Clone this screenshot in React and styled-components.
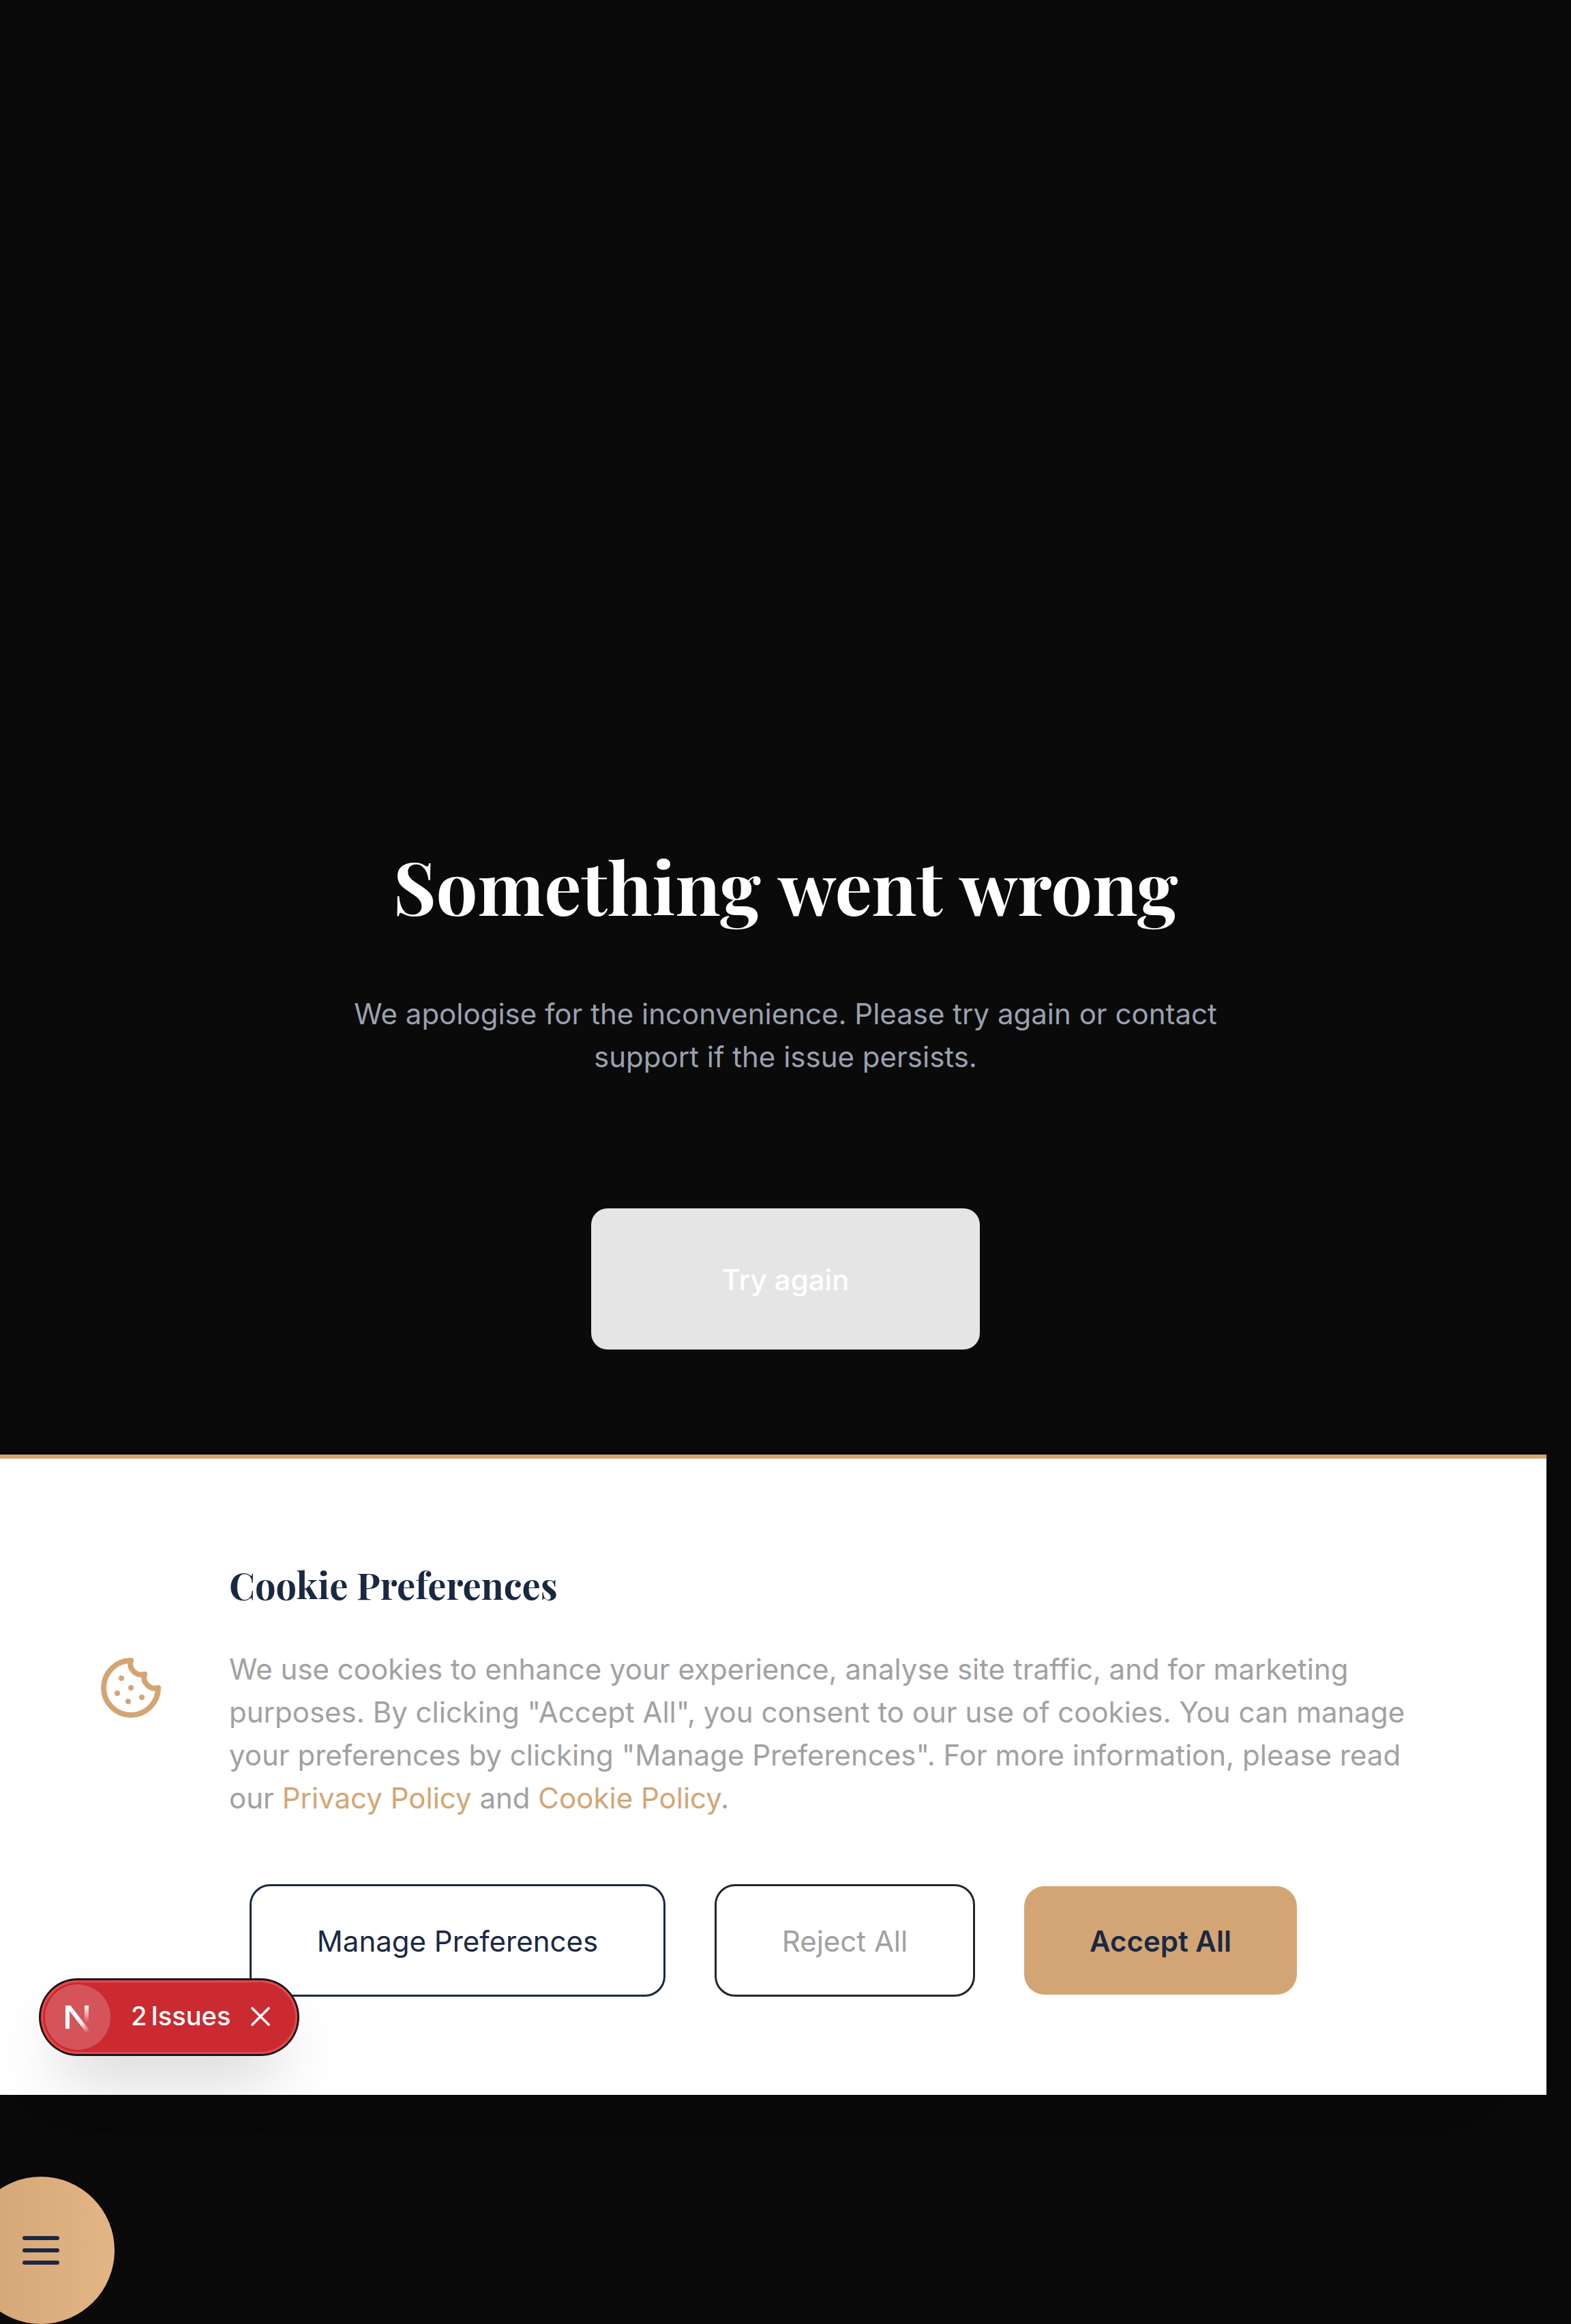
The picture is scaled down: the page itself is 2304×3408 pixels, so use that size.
import React from "react";
import styled, { createGlobalStyle } from "styled-components";
import { Cookie } from "lucide-react";

const navy = "#1a2942";
const tan = "#d4a574";
const serif = `"Playfair Display", "Liberation Serif", serif`;
const sans = `Inter, "Liberation Sans", sans-serif`;

const GlobalStyle = createGlobalStyle`
  *, *::before, *::after { box-sizing: border-box; }
  html, body { margin: 0; background: #0a0a0a; }
  h1, h2, p { margin: 0; }
  button { font: inherit; cursor: pointer; }
`;

const Page = styled.div`
  position: relative;
  display: flex;
  flex-direction: column;
  width: 2304px;
  height: 3408px;
  overflow: hidden;
  background: #0a0a0a;
  font-family: ${sans};
  font-size: 42px;
  line-height: 63px;
`;

const ErrorPanel = styled.main`
  display: flex;
  flex-direction: column;
  align-items: center;
  height: 2133px;
  padding-top: 1232px;
  text-align: center;
`;

const ErrorTitle = styled.h1`
  font-family: ${serif};
  font-size: 108px;
  font-weight: 700;
  line-height: 132px;
  word-spacing: 3.3px;
  color: #fff;
  white-space: nowrap;
`;

const ErrorText = styled.p`
  width: 1344px;
  margin-top: 91px;
  color: #99a1af;
`;

const RetryButton = styled.button`
  width: 570px;
  height: 207px;
  margin-top: 191px;
  padding: 2px 0 0;
  border: 0;
  border-radius: 24px;
  background: #e5e5e5;
  color: #fff;
  font-weight: 500;
`;

const Banner = styled.section`
  display: flex;
  flex-direction: column;
  flex: none;
  width: 2268px;
  height: 939px;
  padding: 144px 144px 0;
  border-top: 6px solid ${tan};
  background: #fff;
  box-shadow: 0 75px 150px -36px rgba(0, 0, 0, 0.25);
`;

const BannerContent = styled.div`
  display: flex;
  align-items: center;
  gap: 96px;
`;

const CookieIcon = styled(Cookie)`
  flex: none;
  margin-bottom: 1px;
`;

const BannerCopy = styled.div`
  width: 1788px;
  color: #a1a1a1;
`;

const BannerTitle = styled.h2`
  margin-bottom: 50px;
  font-family: ${serif};
  font-size: 54px;
  font-weight: 700;
  line-height: 83px;
  color: ${navy};
`;

const PolicyLink = styled.a`
  color: ${tan};
`;

const BannerActions = styled.div`
  display: flex;
  align-items: center;
  justify-content: center;
  gap: 72px;
  margin: 95px -144px 0;
`;

const ActionButton = styled.button`
  width: ${(p) => p.$width}px;
  height: ${(p) => (p.$border ? 165 : 159)}px;
  padding: 2px 0 0;
  border: ${(p) => (p.$border ? `3px solid ${p.$border}` : "0")};
  border-radius: 30px;
  background: ${(p) => p.$fill || "transparent"};
  color: ${(p) => p.$color};
  font-weight: ${(p) => p.$weight || 400};
  white-space: nowrap;
`;

const IssuesPill = styled.div`
  position: absolute;
  left: 60px;
  top: 2904px;
  display: flex;
  align-items: center;
  width: 376px;
  height: 108px;
  padding-left: 6px;
  border-radius: 54px;
  background: #ca2a30;
  color: #fff;
  font-size: 38px;
  font-weight: 500;
  line-height: 42px;
  box-shadow: 0 0 0 3px #171717, inset 0 0 0 3px #e5484d,
    0 48px 96px -24px rgba(0, 0, 0, 0.24);
`;

const LogoBadge = styled.div`
  display: flex;
  align-items: center;
  justify-content: center;
  flex: none;
  width: 96px;
  height: 96px;
  border-radius: 50%;
  background: rgba(255, 255, 255, 0.2);

  svg {
    overflow: visible;
  }
`;

const IssuesLabel = styled.div`
  display: flex;
  gap: 6px;
  width: 148px;
  margin: 0 28px 4px 30px;
  white-space: nowrap;
`;

const CloseGlyph = styled.svg`
  flex: none;
  margin-bottom: 2px;
`;

const MenuButton = styled.button`
  display: flex;
  flex-direction: column;
  align-items: center;
  justify-content: center;
  gap: 12px;
  flex: none;
  width: 216px;
  height: 216px;
  margin: 120px 0 0 -48px;
  padding: 0;
  border: 0;
  border-radius: 50%;
  background: linear-gradient(90deg, ${tan}, #e4b584);
`;

const MenuBar = styled.span`
  width: 54px;
  height: 6px;
  border-radius: 3px;
  background: ${navy};
`;

function NextLogo() {
  return (
    <svg width="42" height="40" viewBox="0 0 42 40" fill="none">
      <defs>
        <linearGradient id="diagonal" x1="24" y1="28" x2="36" y2="43" gradientUnits="userSpaceOnUse">
          <stop stopColor="#fff" />
          <stop offset="1" stopColor="#fff" stopOpacity="0" />
        </linearGradient>
        <linearGradient id="stem" x1="0" y1="3" x2="0" y2="28" gradientUnits="userSpaceOnUse">
          <stop stopColor="#fff" />
          <stop offset="1" stopColor="#fff" stopOpacity="0" />
        </linearGradient>
      </defs>
      <path d="M3 3h6v34H3z" fill="#fff" />
      <path d="M3 3h7.5L39.5 41l-4.5 4L6 7z" fill="url(#diagonal)" />
      <path d="M31 3h6v25h-6z" fill="url(#stem)" />
    </svg>
  );
}

function CloseIcon() {
  return (
    <CloseGlyph width="28" height="28" viewBox="0 0 28 28" fill="none" stroke="#fff" strokeWidth="3.6" strokeLinecap="round">
      <path d="M2 2l24 24M26 2L2 26" />
    </CloseGlyph>
  );
}

export default function App() {
  return (
    <>
      <GlobalStyle />
      <Page>
        <ErrorPanel>
          <ErrorTitle>Something went wrong</ErrorTitle>
          <ErrorText>
            We apologise for the inconvenience. Please try again or contact
            support if the issue persists.
          </ErrorText>
          <RetryButton>Try again</RetryButton>
        </ErrorPanel>
        <Banner>
          <BannerContent>
            <CookieIcon size={96} color={tan} />
            <BannerCopy>
              <BannerTitle>Cookie Preferences</BannerTitle>
              <p>
                We use cookies to enhance your experience, analyse site traffic,
                and for marketing purposes. By clicking "Accept All", you consent
                to our use of cookies. You can manage your preferences by
                clicking "Manage Preferences". For more information, please read
                our <PolicyLink>Privacy Policy</PolicyLink> and{" "}
                <PolicyLink>Cookie Policy</PolicyLink>.
              </p>
            </BannerCopy>
          </BannerContent>
          <BannerActions>
            <ActionButton $width={610} $border={navy} $color={navy}>
              Manage Preferences
            </ActionButton>
            <ActionButton $width={382} $border="#262626" $color="#a1a1a1">
              Reject All
            </ActionButton>
            <ActionButton $width={400} $fill={tan} $color={navy} $weight={600}>
              Accept All
            </ActionButton>
          </BannerActions>
        </Banner>
        <MenuButton aria-label="Menu">
          <MenuBar />
          <MenuBar />
          <MenuBar />
        </MenuButton>
        <IssuesPill>
          <LogoBadge>
            <NextLogo />
          </LogoBadge>
          <IssuesLabel>
            <span>2</span>
            <span>Issues</span>
          </IssuesLabel>
          <CloseIcon />
        </IssuesPill>
      </Page>
    </>
  );
}
